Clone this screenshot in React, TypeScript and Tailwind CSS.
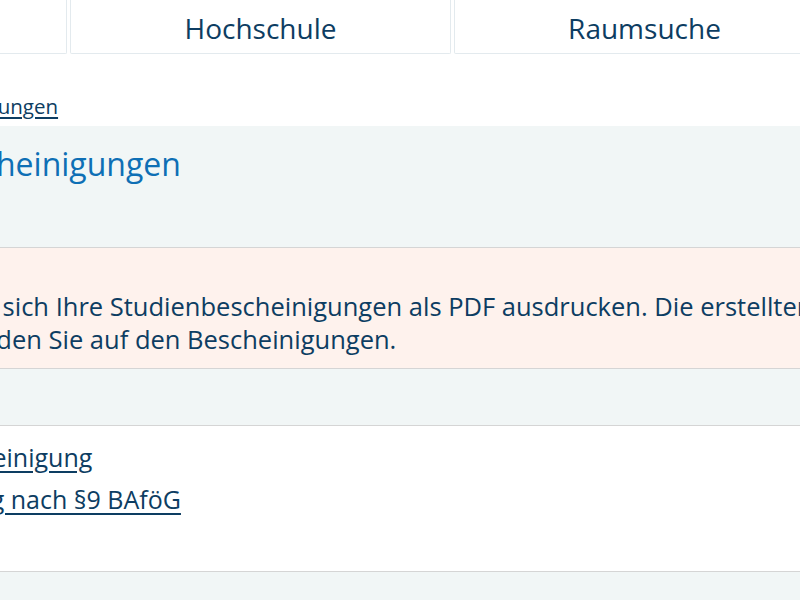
const tabs = ['Studienangebot', 'Hochschule', 'Raumsuche'];

const links = ['Studienbescheinigung', 'Bescheinigung nach §9 BAföG'];

export default function App() {
    return (
        <div className="h-[600px] w-[800px] overflow-hidden bg-white font-['Open_Sans',sans-serif] text-[#0d3d62]">
            {/* page is scrolled sideways, so the left part sits outside the window */}
            <div className="ml-[-314px] w-[1400px]">
                <nav className="flex gap-[3px]">
                    {tabs.map((tab) => (
                        <a
                            key={tab}
                            href="#"
                            className="flex h-[54px] w-[381px] items-center justify-center rounded-b-[2px] border border-t-0 border-[#e3eaee] pt-[3px] text-[28px] text-[#0d3d62]"
                        >
                            {tab}
                        </a>
                    ))}
                </nav>

                <div className="pt-[37px] pb-[5px] pl-[137px] text-[20.5px] leading-[30px]">
                    <a href="#" className="underline underline-offset-[3px]">
                        Studienbescheinigungen
                    </a>
                </div>

                <div className="h-[121px] bg-[#f1f6f6] pt-[16px] pl-[128px]">
                    <h1 className="text-[32px] leading-[44px] text-[#0e6fb5]">Studienbescheinigungen</h1>
                </div>

                <div className="border-y border-[#d5d5d5] bg-[#fef2ed] pt-[42px] pb-[12px] pl-[122px] text-[25.5px] leading-[33px] whitespace-nowrap">
                    <p>
                        Hier können Sie sich Ihre Studienbescheinigungen als PDF ausdrucken. Die erstellten Dokumente
                        sind digital signiert.
                    </p>
                    <p>Mehr Details finden Sie auf den Bescheinigungen.</p>
                </div>

                <div className="h-[57px] border-b border-[#d5d5d5] bg-[#f1f6f6]" />

                <ul className="h-[146px] border-b border-[#d5d5d5] bg-white pt-[10px] pl-[149px] text-[25px] leading-[42px]">
                    {links.map((link) => (
                        <li key={link}>
                            <a href="#" className="underline underline-offset-[4px]">
                                {link}
                            </a>
                        </li>
                    ))}
                </ul>

                <div className="h-[60px] bg-[#f1f6f6]" />
            </div>
        </div>
    );
}
